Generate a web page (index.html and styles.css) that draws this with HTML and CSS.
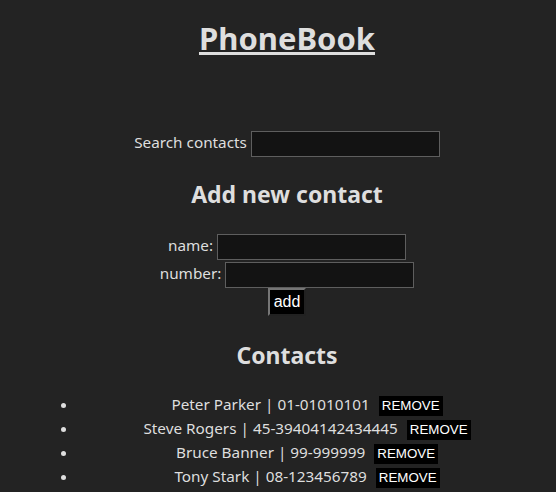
FILE: index.html
```html
<!DOCTYPE html>
<html>
<head>
<meta charset="utf-8">
<link rel="stylesheet" href="styles.css">
</head>
<body>
<div class="app">
  <h1 class="title">PhoneBook</h1>
  <div class="search">
    <label>Search contacts <input class="field" type="text"></label>
  </div>
  <h2 class="heading">Add new contact</h2>
  <form class="form">
    <div class="row">name: <input class="field" type="text"></div>
    <div class="row">number: <input class="field" type="text"></div>
    <div class="row"><button class="add" type="button">add</button></div>
  </form>
  <h2 class="heading">Contacts</h2>
  <ul class="list">
    <li>Peter Parker | 01-01010101 <button class="remove" type="button">REMOVE</button></li>
    <li>Steve Rogers | 45-39404142434445 <button class="remove" type="button">REMOVE</button></li>
    <li>Bruce Banner | 99-999999 <button class="remove" type="button">REMOVE</button></li>
    <li>Tony Stark | 08-123456789 <button class="remove" type="button">REMOVE</button></li>
  </ul>
</div>
</body>
</html>
```

FILE: styles.css
```css
html, body {
  background: #232323;
}
body {
  margin: 8px;
  color: #dedede;
  font-family: "Noto Sans", sans-serif;
  font-size: 15.3px;
}
.app {
  padding-left: 18px;
  text-align: center;
}
.title {
  font-size: 31px;
  font-weight: bold;
  text-decoration: underline;
  margin: 11px 0 0;
  line-height: 38px;
}
.search {
  margin-top: 72px;
  line-height: 26px;
}
.field {
  width: 189px;
  height: 26px;
  box-sizing: border-box;
  background: #131313;
  border: 1px solid #5e5e5e;
  color: #dedede;
  vertical-align: middle;
  padding: 0 3px;
  margin: 0;
}
.heading {
  font-size: 23px;
  font-weight: bold;
  margin: 0;
  line-height: 28px;
}
.search + .heading {
  margin-top: 23px;
}
.form {
  margin-top: 24px;
}
.row {
  line-height: 26px;
  height: 28px;
}
.row:first-child {
  height: 26px;
  margin-bottom: 2px;
}
.row:last-child {
  height: 28px;
}
.add {
  background: #000;
  color: #fff;
  font-family: "Liberation Sans", sans-serif;
  font-size: 16px;
  border: 2px outset #767676;
  width: 38px;
  height: 28px;
  padding: 0;
  vertical-align: top;
}
.form + .heading {
  margin-top: 25px;
}
.list {
  margin: 23px 0 0;
  padding: 0 12px 0 52px;
}
.list li {
  line-height: 24px;
}
.remove {
  background: #000;
  color: #fff;
  border: none;
  font-family: "Liberation Sans", sans-serif;
  font-size: 13.33px;
  padding: 2px 3px;
  height: 20px;
  margin-left: 5px;
  vertical-align: middle;
}
```
